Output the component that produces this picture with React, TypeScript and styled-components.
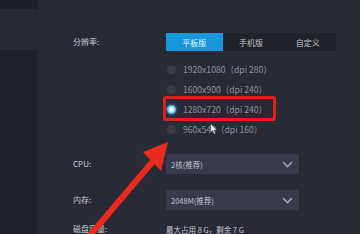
import React from 'react';
import styled, { createGlobalStyle } from 'styled-components';

const GlobalStyle = createGlobalStyle`
  html, body {
    margin: 0;
    padding: 0;
    background: #272a35;
  }
  body {
    font-family: 'Noto Sans CJK SC', 'Noto Sans', sans-serif;
  }
`;

const resolutions = [
  { label: '1920x1080（dpi 280）', selected: false },
  { label: '1600x900（dpi 240）', selected: false },
  { label: '1280x720（dpi 240）', selected: true },
  { label: '960x540（dpi 160）', selected: false },
];

const tabs = ['平板版', '手机版', '自定义'];

const Chevron = () => (
  <svg width="11" height="7" viewBox="0 0 11 7">
    <path d="M1 1 L5.5 5.5 L10 1" fill="none" stroke="#9ea3b6" strokeWidth="1.6" />
  </svg>
);

const App: React.FC = () => {
  return (
    <Screen>
      <GlobalStyle />
      <Sidebar>
        <SideTop />
        <SideHead />
        <SideBody />
      </Sidebar>
      <Main>
        <TopLine />
        <Form>
          <Label>分辨率:</Label>
          <TabGroup>
            {tabs.map((t, i) => (
              <Tab key={t} active={i === 0}>
                {t}
              </Tab>
            ))}
          </TabGroup>
          <Spacer />
          <RadioList>
            {resolutions.map((r) => (
              <RadioRow key={r.label}>
                <Radio selected={r.selected} />
                <RadioText>{r.label}</RadioText>
              </RadioRow>
            ))}
          </RadioList>
          <Label>CPU:</Label>
          <Select>
            <span>2核(推荐)</span>
            <Chevron />
          </Select>
          <Label>内存:</Label>
          <Select>
            <span>2048M(推荐)</span>
            <Chevron />
          </Select>
          <Label>磁盘容量:</Label>
          <Value>最大占用 8 G，剩余 7 G</Value>
        </Form>
        <Highlight />
        <Cursor width="8" height="12" viewBox="0 0 8 12">
          <path d="M0.5 0.5 L0.5 9.5 L2.6 7.6 L4.2 11.2 L5.6 10.6 L4.1 7.1 L7 7.1 Z" fill="#f2f2f2" stroke="#333" strokeWidth="0.6" />
        </Cursor>
        <Arrow width="360" height="234" viewBox="0 0 360 234">
          <line x1="86" y1="240" x2="154" y2="160" stroke="#ec2a20" strokeWidth="6" />
          <polygon points="168,142 143,152 161,171" fill="#ec2a20" />
        </Arrow>
      </Main>
    </Screen>
  );
};

const Screen = styled.div`
  width: 360px;
  height: 234px;
  display: flex;
  overflow: hidden;
  background: #272a35;
  position: relative;
`;

const Sidebar = styled.div`
  width: 37px;
  display: flex;
  flex-direction: column;
  border-right: 1px solid #23262f;
`;

const SideTop = styled.div`
  height: 9px;
  background: #1d2028;
`;

const SideHead = styled.div`
  height: 41px;
  background: #262a35;
`;

const SideBody = styled.div`
  flex: 1;
  background: #1f222b;
`;

const Main = styled.div`
  flex: 1;
  display: flex;
  flex-direction: column;
  background: #282b36;
`;

const TopLine = styled.div`
  height: 2px;
  background: #1f2229;
`;

const Form = styled.div`
  display: grid;
  grid-template-columns: 93px 170px;
  grid-auto-rows: auto;
  align-items: center;
  padding: 32px 0 0 35px;
`;

const Label = styled.div`
  font-size: 8px;
  color: #c9cbd2;
  line-height: 20px;
`;

const Spacer = styled.div``;

const TabGroup = styled.div`
  display: flex;
  height: 18px;
  background: #1f2229;
`;

const Tab = styled.div<{ active: boolean }>`
  flex: 1;
  display: flex;
  align-items: center;
  justify-content: center;
  font-size: 8px;
  color: ${(p) => (p.active ? '#e6f4fc' : '#c3c6cd')};
  background: ${(p) => (p.active ? '#1797dc' : 'transparent')};
`;

const RadioList = styled.div`
  display: flex;
  flex-direction: column;
  padding: 7px 0 7px 1px;
`;

const RadioRow = styled.div`
  display: flex;
  align-items: center;
  gap: 7px;
  height: 20px;
`;

const Radio = styled.div<{ selected: boolean }>`
  width: 9px;
  height: 9px;
  border-radius: 50%;
  background: ${(p) =>
    p.selected
      ? 'radial-gradient(circle, #ffffff 0 25%, #7fd3f7 45%, #2aa6e8 100%)'
      : '#3a3d48'};
  box-shadow: ${(p) => (p.selected ? '0 0 3px #3bb4f0' : 'none')};
`;

const RadioText = styled.span`
  font-size: 8.6px;
  color: #8e919b;
  white-space: nowrap;
`;

const Select = styled.div`
  width: 133px;
  height: 20px;
  box-sizing: border-box;
  background: #373b4c;
  display: flex;
  align-items: center;
  justify-content: space-between;
  padding: 0 6px 0 5px;
  margin: 8px 0;
  font-size: 7.5px;
  color: #c4c7d0;
`;

const Value = styled.div`
  font-size: 7.5px;
  color: #c4c7d0;
  line-height: 20px;
  margin-top: 2px;
`;

const Highlight = styled.div`
  position: absolute;
  left: 163px;
  top: 96px;
  width: 113px;
  height: 25px;
  box-sizing: border-box;
  border: 3px solid #e3211b;
  border-radius: 3px;
`;

const Cursor = styled.svg`
  position: absolute;
  left: 210px;
  top: 123px;
`;

const Arrow = styled.svg`
  position: absolute;
  left: 0;
  top: 0;
  pointer-events: none;
`;

export default App;
